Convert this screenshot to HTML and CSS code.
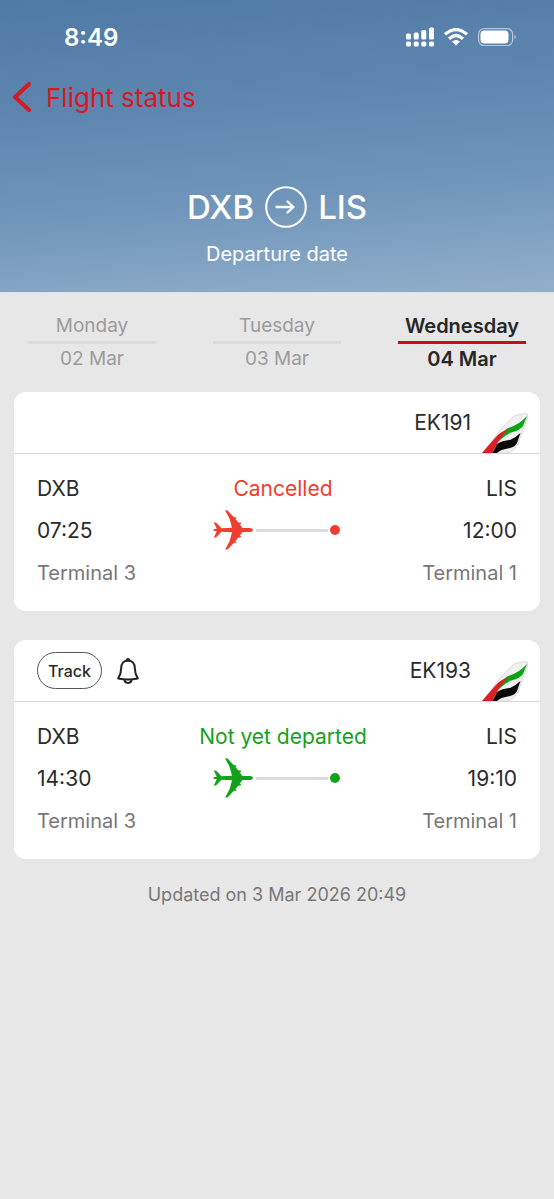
FILE: index.html
```html
<!DOCTYPE html>
<html lang="en">
<head>
<meta charset="utf-8">
<meta name="viewport" content="width=device-width, initial-scale=1">
<title>Flight status</title>
<link rel="stylesheet" href="styles.css">
</head>
<body>
<svg class="defs" aria-hidden="true">
  <symbol id="plane" viewBox="0 0 40 40">
    <path d="M12.200 0.500C13.500 0 15 0.700 16 2L22 8.500L26.700 14L29.300 18H37C39 18 39.800 19 39.800 20C39.800 21 39 22 37 22H29.300L26.700 26L22 31.500L16 38C15 39.300 13.500 40 12.200 39.500L16.700 31L19 22.200L8.500 21.700L3 27.500H0.800L3.800 21.300L0.500 20.700V19.300L3.800 18.700L0.800 12.500H3L8.500 18.300L19 17.800L16.700 9Z"/>
    <path d="M21 8H22.800M25.500 13.300H27.300M21 32H22.800M25.500 26.700H27.300" fill="none" stroke="currentColor" stroke-width="1.500" stroke-linecap="round"/>
  </symbol>
  <symbol id="tail" viewBox="0 0 46 40">
    <path d="M0 40L20 15Q30 3.500 35 2L43.500 0.500Q46.500 0.500 45.500 4L36 31Q33 38 25 40Z" fill="#f0f0f0" stroke="#d2d2d2" stroke-width="0.800"/>
    <path d="M17 24L25 15.500Q37 12 45 3L41 13Q37 18 29 19.500Q23 22 17 28Z" fill="#0ba514"/>
    <path d="M0 40L13 25Q18 19 26 16Q16 27 10.500 40Z" fill="#dd1f24"/>
    <path d="M10.500 40L15 31Q20 27.500 28 27Q33 25 38.500 20L35 30Q33 34 28 35Q18 36.500 15 40Z" fill="#080808"/>
  </symbol>
</svg>

<header class="hero">
  <div class="statusbar">
    <span class="clock">8:49</span>
    <span class="indicators">
      <svg width="28" height="20" viewBox="0 0 28 20" fill="#fff" aria-label="Signal">
        <rect x="0" y="6.500" width="5" height="6" rx="1.500"/><rect x="7.700" y="5.500" width="5" height="7" rx="1.500"/><rect x="15.300" y="3" width="5" height="9.500" rx="1.500"/><rect x="23" y="0.500" width="5" height="12" rx="1.500"/>
        <rect x="0" y="14.500" width="5" height="5" rx="1.500"/><rect x="7.700" y="14.500" width="5" height="5" rx="1.500"/><rect x="15.300" y="14.500" width="5" height="5" rx="1.500"/><rect x="23" y="14.500" width="5" height="5" rx="1.500"/>
      </svg>
      <svg width="24" height="18" viewBox="0 0 24 18" aria-label="Wi-Fi">
        <g fill="none" stroke="#fff" stroke-width="3.200"><path d="M1 6.300Q12-3.300 23 6.300"/><path d="M5 10.700Q12 4.300 19 10.700"/></g>
        <path d="M8 13.500Q12 10.500 16 13.500L12 17.500Z" fill="#fff"/>
      </svg>
      <svg class="battery" width="38" height="18" viewBox="0 0 38 18" aria-label="Battery">
        <rect x="0.600" y="0.600" width="34" height="17" rx="5.500" fill="none" stroke="#b5c8dc" stroke-width="1.200"/>
        <rect x="2.500" y="2.500" width="28" height="13" rx="4" fill="#fff"/>
        <path d="M36.500 6.500Q39 9 36.500 11.500Z" fill="#b5c8dc"/>
      </svg>
    </span>
  </div>
  <nav><a class="back" href="#">
    <svg width="20" height="30" viewBox="0 0 20 30" fill="none" stroke="#d71921" stroke-width="4" stroke-linecap="round" stroke-linejoin="round" aria-hidden="true"><path d="M17 2L3 15L17 28"/></svg>
    <span>Flight status</span></a></nav>
  <h1 class="route">
    <span>DXB</span>
    <svg width="42" height="42" viewBox="0 0 42 42" fill="none" stroke="#fff" stroke-width="2" stroke-linecap="round" stroke-linejoin="round" role="img" aria-label="to"><circle cx="21" cy="21" r="19.800"/><path d="M11.500 21H28M22.500 15.500L28.500 21L22.500 26.500" stroke-width="2.300"/></svg>
    <span>LIS</span>
  </h1>
  <p class="subtitle">Departure date</p>
</header>

<main>
  <div class="days">
    <button class="day"><span class="name">Monday</span><span>02 Mar</span></button>
    <button class="day"><span class="name">Tuesday</span><span>03 Mar</span></button>
    <button class="day active" aria-pressed="true"><span class="name">Wednesday</span><span>04 Mar</span></button>
  </div>

  <div class="flights">
    <article class="card cancelled">
      <div class="card-head">
        <span class="number">EK191</span>
        <svg class="tail" aria-hidden="true"><use href="#tail"/></svg>
      </div>
      <div class="card-body">
        <div class="place"><span>DXB</span><span>07:25</span><span class="terminal">Terminal 3</span></div>
        <div class="progress">
          <span class="state">Cancelled</span>
          <span class="track-line"><svg class="plane" aria-hidden="true"><use href="#plane"/></svg><i class="line"></i><i class="dot"></i></span>
        </div>
        <div class="place end"><span>LIS</span><span>12:00</span><span class="terminal">Terminal 1</span></div>
      </div>
    </article>

    <article class="card waiting">
      <div class="card-head">
        <button class="track">Track</button>
        <button class="bell" aria-label="Notifications">
          <svg width="22" height="26" viewBox="0 0 22 26" fill="none" stroke="#222" stroke-width="2" stroke-linejoin="round"><path d="M11 2.500C6.500 2.500 4.200 6 4.200 10C4.200 15 3 17.500 1.200 20.500Q11 22.500 20.800 20.500C19 17.500 17.800 15 17.800 10C17.800 6 15.500 2.500 11 2.500Z"/><path d="M7.500 21.500C7.500 26 14.500 26 14.500 21.500"/><path d="M8.500 3Q9 0.500 11 0.500Q13 0.500 13.500 3Z" fill="#222" stroke-width="1"/></svg>
        </button>
        <span class="number">EK193</span>
        <svg class="tail" aria-hidden="true"><use href="#tail"/></svg>
      </div>
      <div class="card-body">
        <div class="place"><span>DXB</span><span>14:30</span><span class="terminal">Terminal 3</span></div>
        <div class="progress">
          <span class="state">Not yet departed</span>
          <span class="track-line"><svg class="plane" aria-hidden="true"><use href="#plane"/></svg><i class="line"></i><i class="dot"></i></span>
        </div>
        <div class="place end"><span>LIS</span><span>19:10</span><span class="terminal">Terminal 1</span></div>
      </div>
    </article>
  </div>

  <p class="updated">Updated on 3 Mar 2026 20:49</p>
</main>
</body>
</html>
```
FILE: styles.css
```css
* { box-sizing: border-box; }
body {
  margin: 0;
  min-height: 100vh;
  background: #e7e7e7;
  color: #2b2b2b;
  font-family: Inter, "Liberation Sans", sans-serif;
  font-size: 20px;
}
button { border: 0; padding: 0; background: none; color: inherit; font: inherit; cursor: pointer; }
svg { display: block; flex: none; }
p, h1 { margin: 0; }
.defs { display: none; }

.hero {
  padding-bottom: 26px;
  background: linear-gradient(175deg, #4f7aa5 0%, #5f87b0 38%, #7095ba 65%, #92afc9 100%);
  border-bottom: 1px solid #dde5ee;
  color: #fff;
}
.statusbar { display: flex; align-items: center; justify-content: space-between; height: 74px; padding: 0 38px 0 64px; }
.clock { font-size: 24px; font-weight: 600; }
.indicators { display: flex; align-items: center; gap: 10px; }
.back { display: inline-flex; align-items: center; gap: 14px; height: 46px; margin-left: 12px; color: #d71921; font-size: 26px; text-decoration: none; }
.route { display: flex; align-items: center; justify-content: center; gap: 11px; padding-top: 66px; font-size: 33px; font-weight: 500; line-height: 42px; }
.subtitle { margin-top: 14px; text-align: center; line-height: 24px; }

.days { display: grid; grid-template-columns: repeat(3, 1fr); gap: 57px; padding: 18px 28px 0; }
.day { display: flex; flex-direction: column; align-items: center; color: #9b9b9b; font-size: 19px; line-height: 30px; }
.day .name { width: 100%; border-bottom: 3px solid #dcdcdc; }
.day.active { color: #262626; font-size: 20px; font-weight: 600; }
.day.active .name { border-color: #c60c1e; }

.flights { display: flex; flex-direction: column; gap: 29px; padding: 18px 14px 0; }
.card { background: #fff; border-radius: 12px; }
.card-head { display: flex; align-items: center; height: 62px; padding: 0 12px 0 23px; border-bottom: 1px solid #d8d8d8; }
.number { margin-left: auto; font-size: 21px; }
.tail { width: 46px; height: 40px; margin-left: 11px; align-self: flex-end; }
.track { height: 37px; padding: 0 10px; border: 1px solid #555; border-radius: 19px; font-size: 16px; font-weight: 500; }
.bell { margin-left: 15px; }

.card-body { display: flex; justify-content: space-between; padding: 14px 23px 18px; font-size: 21px; line-height: 42px; }
.place { display: flex; flex: 1; flex-direction: column; }
.end { text-align: right; }
.card-body { padding: 14px 23px 17px; }
.terminal { color: #777; font-size: 20px; }
.progress { display: flex; flex-direction: column; align-items: center; padding-left: 12px; white-space: nowrap; }
.track-line { display: flex; align-items: center; height: 40px; margin-right: 14px; }
.plane { width: 40px; height: 40px; fill: currentColor; }
.line { width: 72px; height: 3px; margin: 0 2px 0 3px; background: #dcdcdc; }
.dot { width: 10px; height: 10px; border-radius: 50%; background: currentColor; }
.cancelled .progress { color: #f03d32; }
.waiting .progress { color: #14a11a; }

.updated { margin-top: 24px; color: #777; font-size: 18px; line-height: 24px; text-align: center; }
```
